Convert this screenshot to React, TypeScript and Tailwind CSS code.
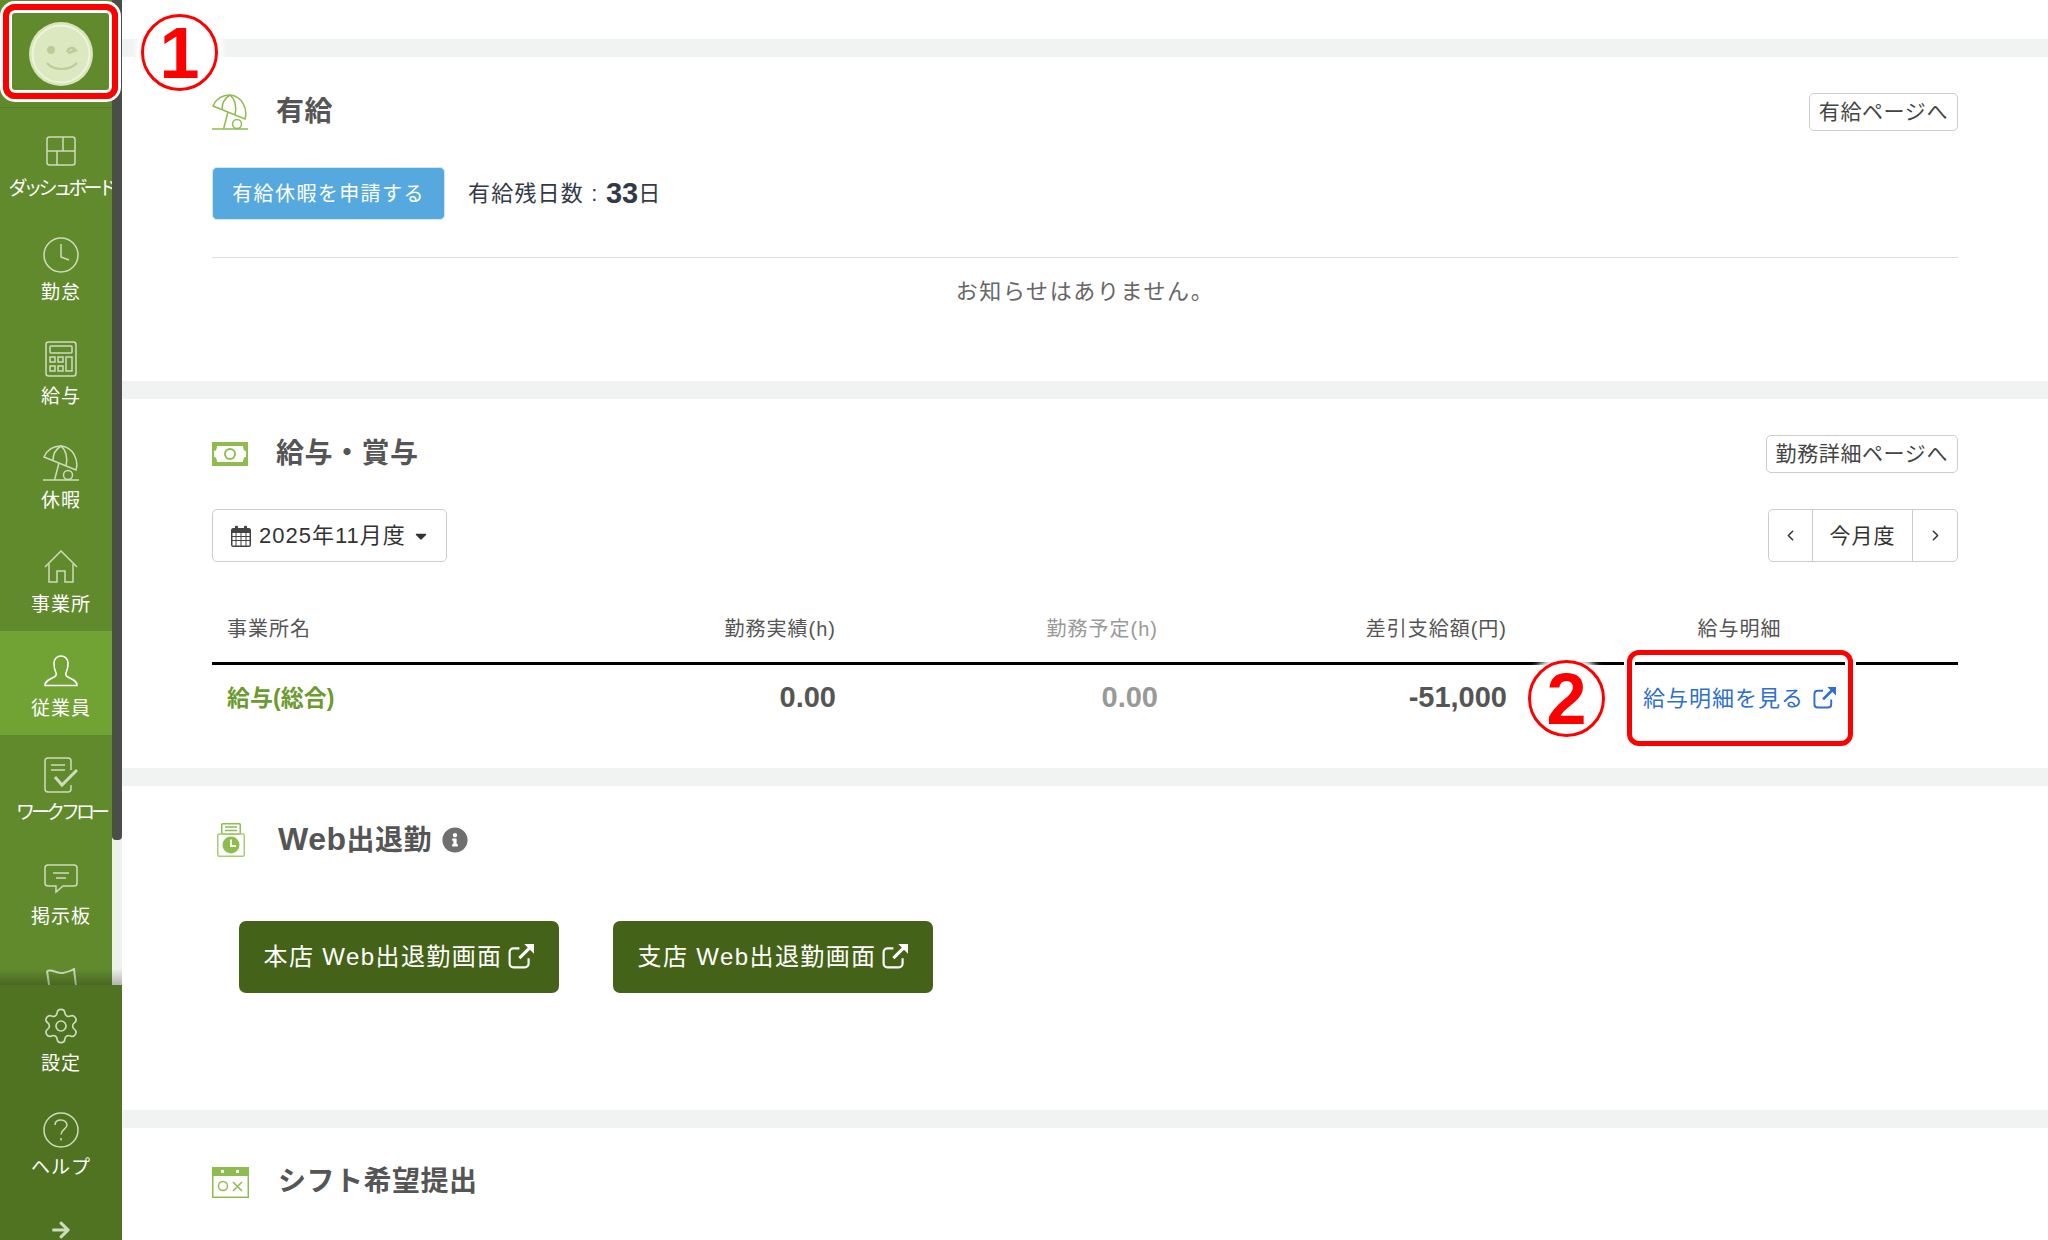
import { ChevronLeft, ChevronRight, Settings } from "lucide-react"
import { FaArrowRight, FaCaretDown, FaInfoCircle } from "react-icons/fa"
import type { ReactNode } from "react"

const Umbrella = ({ className }: { className: string }) => (
  <svg viewBox="0 0 36 36" fill="none" stroke="currentColor" strokeWidth="1.5" className={className}>
    <path d="M0 35H36" />
    <path d="M1 12L33 25C36 15 30 2 18 1C10 1 4 5 1 12Z" />
    <path d="M10 15.5C10 9 13 4 18 1C23 5 25 13 23 21" />
    <path d="M16 18L11.5 35" />
    <circle cx="25" cy="30" r="4.5" />
  </svg>
)

const Dashboard = () => (
  <svg viewBox="0 0 30 30" fill="none" stroke="currentColor" strokeWidth="1.5" className="w-[30px] h-[30px]">
    <rect x="1" y="1" width="28" height="28" rx="2.5" />
    <path d="M1 15H29M17 1V15M11 15V29" />
  </svg>
)

const Clock = () => (
  <svg viewBox="0 0 36 36" fill="none" stroke="currentColor" strokeWidth="1.5" className="w-9 h-9">
    <circle cx="18" cy="18" r="17" />
    <path d="M18 7V20L26 23" />
  </svg>
)

const Calculator = () => (
  <svg viewBox="0 0 32 36" fill="none" stroke="currentColor" strokeWidth="1.5" className="w-8 h-9">
    <rect x="1" y="1" width="30" height="34" rx="2.5" />
    <rect x="5" y="5" width="22" height="7" rx="1" />
    <rect x="5" y="16" width="5" height="5" />
    <rect x="13" y="16" width="5" height="5" />
    <rect x="21" y="16" width="6" height="14" />
    <rect x="5" y="25" width="5" height="5" />
    <rect x="13" y="25" width="5" height="5" />
  </svg>
)

const House = () => (
  <svg viewBox="0 0 34 34" fill="none" stroke="currentColor" strokeWidth="1.5" className="w-[34px] h-[34px]">
    <path d="M1 17L17 1L33 17" />
    <path d="M5 14V32H13V21H21V32H29V14" />
  </svg>
)

const Person = () => (
  <svg viewBox="0 0 34 32" fill="none" stroke="currentColor" strokeWidth="1.6" className="w-[34px] h-8">
    <path d="M1 30.500H33C33 25 27 24 23 21.500C21 20 21.500 18.500 22.500 16.500C24 13.500 24 11 24 8C24 4 21 1 17 1C13 1 10 4 10 8C10 11 10 13.500 11.500 16.500C12.500 18.500 13 20 11 21.500C7 24 1 25 1 30.500Z" />
  </svg>
)

const Workflow = () => (
  <svg viewBox="0 0 34 36" fill="none" stroke="currentColor" strokeWidth="1.5" className="w-[34px] h-9">
    <path d="M27 13V4C27 2 26 1 24 1H4C2 1 1 2 1 4V32C1 34 2 35 4 35H24C26 35 27 34 27 32V28" />
    <path d="M7 8H21M7 13H21" />
    <path d="M11 20L18 28L33 13" strokeWidth="3" />
  </svg>
)

const Board = () => (
  <svg viewBox="0 0 34 30" fill="none" stroke="currentColor" strokeWidth="1.5" className="w-[34px] h-[30px]">
    <path d="M4 1H30C32 1 33 2 33 4V19C33 21 32 22 30 22H19L12 28V22H4C2 22 1 21 1 19V4C1 2 2 1 4 1Z" />
    <path d="M9 9H25M12 14H22" />
  </svg>
)

const Flag = () => (
  <svg viewBox="0 0 32 30" fill="none" stroke="currentColor" strokeWidth="2" className="w-8 h-[30px]">
    <path d="M2 3C8 1 12 6 18 5C22 4 26 3 29 1L31 18C26 22 10 20 6 20" />
    <path d="M2 3L6 30" />
  </svg>
)

const Help = () => (
  <svg viewBox="0 0 36 36" fill="none" stroke="currentColor" strokeWidth="1.5" className="w-9 h-9">
    <circle cx="18" cy="18" r="17" />
    <path d="M12 13C12 9.500 15 8 18 8C21 8 24 10 24 13C24 17 18 17.500 18 22.500" />
    <path d="M18 26V28.500" />
  </svg>
)

const Money = () => (
  <svg viewBox="0 0 36 24" className="w-9 h-6">
    <path fillRule="evenodd" fill="#8fbc4f" d="M0 0H36V24H0ZM5 4C5 7 4 9 2 9V15C4 15 5 17 5 20H31C31 17 32 15 34 15V9C32 9 31 7 31 4Z" />
    <circle cx="18" cy="12" r="5" fill="none" stroke="#8fbc4f" strokeWidth="2" />
  </svg>
)

const WebClock = () => (
  <svg viewBox="0 0 28 34" fill="none" className="w-7 h-[34px]">
    <rect x="4.750" y="0.750" width="18.500" height="10.500" rx="1" stroke="#8fbc4f" strokeWidth="1.500" />
    <path d="M8 4H20M8 7.500H20" stroke="#8fbc4f" strokeWidth="1.500" />
    <rect x="0.750" y="11" width="26.500" height="22.250" rx="1.500" stroke="#a9cd75" strokeWidth="1.500" />
    <circle cx="14" cy="22" r="8.500" fill="#8fbc4f" />
    <path d="M14 16.500V23H19" stroke="#fff" strokeWidth="1.800" />
  </svg>
)

const ShiftCal = () => (
  <svg viewBox="0 0 37 31" fill="none" className="w-[37px] h-[31px]">
    <rect x="0.750" y="0.750" width="35.500" height="29.500" stroke="#8fbc4f" strokeWidth="1.500" />
    <path fill="#8fbc4f" fillRule="evenodd" d="M0 0H37V9H0ZM9 3V6H12V3ZM24 3V6H27V3Z" />
    <circle cx="11" cy="19" r="4.500" stroke="#8fbc4f" strokeWidth="1.500" />
    <path d="M21 15L30 24M30 15L21 24" stroke="#8fbc4f" strokeWidth="1.500" />
  </svg>
)

const CalendarIcon = () => (
  <svg viewBox="0 0 20 22" className="w-5 h-[22px]">
    <path fill="#444" fillRule="evenodd" d="M2 3H4V1.500C4 .5 7 .5 7 1.500V3H13V1.500C13 .5 16 .5 16 1.500V3H18C19 3 20 4 20 5V20C20 21 19 22 18 22H2C1 22 0 21 0 20V5C0 4 1 3 2 3ZM1.500 8V11H4.500V8ZM5.500 8V11H9.500V8ZM10.500 8V11H14.500V8ZM15.500 8V11H18.500V8ZM1.500 12V15H4.500V12ZM5.500 12V15H9.500V12ZM10.500 12V15H14.500V12ZM15.500 12V15H18.500V12ZM1.500 16V20.500H4.500V16ZM5.500 16V20.500H9.500V16ZM10.500 16V20.500H14.500V16ZM15.500 16V20.500H18.500V16Z" />
  </svg>
)

const ExternalLink = ({ className }: { className: string }) => (
  <svg viewBox="0 0 24 24" fill="none" stroke="currentColor" className={className}>
    <path d="M19 14V19C19 21 17.500 22.500 15.500 22.500H5C3 22.500 1.500 21 1.500 19V8.500C1.500 6.500 3 5 5 5H10.500" strokeWidth="2" />
    <path d="M10.500 14L20 4.500" strokeWidth="2.800" />
    <path d="M15 1H24V10Z" fill="currentColor" stroke="none" />
  </svg>
)

const navItems: { label: string; icon: ReactNode; active?: boolean; tight?: boolean }[] = [
  { label: "ダッシュボード", icon: <Dashboard />, tight: true },
  { label: "勤怠", icon: <Clock /> },
  { label: "給与", icon: <Calculator /> },
  { label: "休暇", icon: <Umbrella className="w-9 h-9" /> },
  { label: "事業所", icon: <House /> },
  { label: "従業員", icon: <Person />, active: true },
  { label: "ワークフロー", icon: <Workflow />, tight: true },
  { label: "掲示板", icon: <Board /> },
  { label: "", icon: <Flag /> },
]

const NavItem = ({ label, icon, active, tight }: { label: string; icon: ReactNode; active?: boolean; tight?: boolean }) => (
  <div className={`h-[104px] shrink-0 pt-5 flex flex-col items-center ${active ? "bg-[#70a334] text-white" : "text-[#cfdcbc]"}`}>
    <div className="h-10 flex items-center justify-center">{icon}</div>
    <div className={`mt-[2px] leading-8 text-[19px] text-white whitespace-nowrap ${tight ? "tracking-[-4px]" : "tracking-[1px]"}`}>
      {label}
    </div>
  </div>
)

const Sidebar = () => (
  <div className="w-[122px] h-[1240px] shrink-0 flex flex-col">
    <div className="flex-1 min-h-0 overflow-hidden relative bg-[#618a2d]">
      <div className="h-[108px] flex items-center justify-center border-b border-[#567d27]">
        <svg viewBox="0 0 64 64" fill="none" className="w-16 h-16">
          <circle cx="32" cy="32" r="32" fill="#d8e5b9" />
          <circle cx="32" cy="32" r="28.500" fill="#dce8c0" stroke="#edf3de" strokeWidth="2" />
          <circle cx="22" cy="28" r="4" fill="#b9cc99" />
          <path d="M38 30C39 26 43 25 46 27M39 31L48 28" stroke="#b9cc99" strokeWidth="2.500" />
          <path d="M18 41C25 49 40 49 48 41" stroke="#b9cc99" strokeWidth="2" />
        </svg>
      </div>
      <div className="pt-[3px] flex flex-col">
        {navItems.map((item) => (
          <NavItem key={item.label || "map"} {...item} />
        ))}
      </div>
      {/* scrollbar */}
      <div className="absolute right-0 top-0 bottom-0 w-[10px] bg-[#eef1ea]">
        <div className="h-[840px] bg-[#4b4d47] rounded-b-[4px]"></div>
      </div>
      <div className="absolute left-0 right-0 bottom-0 h-4 bg-gradient-to-b from-transparent to-[#00000040]"></div>
    </div>
    <div className="h-[255px] shrink-0 bg-[#4f7321] pt-px overflow-hidden">
      <NavItem label="設定" icon={<Settings size={40} strokeWidth={1} />} />
      <NavItem label="ヘルプ" icon={<Help />} />
      <div className="pt-[26px] flex justify-center text-[#cfdcbc]">
        <FaArrowRight size={20} />
      </div>
    </div>
  </div>
)

const SectionTitle = ({ icon, children, gap = "w-[64px]" }: { icon: ReactNode; children: ReactNode; gap?: string }) => (
  <div className="flex items-center h-10">
    <div className={`${gap} flex items-center`}>{icon}</div>
    <div className="text-[28px] leading-10 font-bold tracking-[0.5px] text-[#555555]">{children}</div>
  </div>
)

const LinkButton = ({ children }: { children: ReactNode }) => (
  <div className="h-[38px] px-[9px] border border-[#cccccc] rounded-[5px] flex items-center text-[21px] tracking-[0.6px] text-[#444444] whitespace-nowrap">
    {children}
  </div>
)

const WebButton = ({ label }: { label: string }) => (
  <div className="w-[320px] h-[72px] bg-[#456318] rounded-[7px] flex items-center justify-center gap-[6px] text-white text-[24px] tracking-[1.4px] whitespace-nowrap">
    <span>{label}</span>
    <ExternalLink className="w-[26px] h-[26px] -mt-[3px]" />
  </div>
)

const tableCols = "grid grid-cols-[300px_338px_322px_349px_437px]"

const PaySection = () => (
  <div className="border-t-[18px] border-[#f1f3f2] pt-[35px] pb-[37px] px-[90px]">
    <div className="flex items-center justify-between">
      <SectionTitle icon={<Money />}>給与・賞与</SectionTitle>
      <LinkButton>勤務詳細ページへ</LinkButton>
    </div>

    <div className="mt-[35px] flex items-center justify-between">
      <div className="w-[235px] h-[53px] border border-[#cccccc] rounded-[5px] flex items-center pl-[18px] gap-[8px] text-[22px] tracking-[1px] text-[#333333] whitespace-nowrap">
        <CalendarIcon />
        <span>2025年11月度</span>
        <FaCaretDown size={18} className="text-[#333333] -ml-[2px]" />
      </div>
      <div className="w-[190px] h-[53px] border border-[#cccccc] rounded-[5px] flex items-center text-[#333333]">
        <div className="w-11 h-full border-r border-[#cccccc] flex items-center justify-center">
          <ChevronLeft size={17} strokeWidth={2.2} />
        </div>
        <div className="flex-1 text-center text-[21px] tracking-[1px]">今月度</div>
        <div className="w-[45px] h-full border-l border-[#cccccc] flex items-center justify-center">
          <ChevronRight size={17} strokeWidth={2.2} />
        </div>
      </div>
    </div>

    <div className={`mt-[50px] ${tableCols} text-[20px] leading-[34px] tracking-[1px] text-[#555555] pb-4 border-b-[3px] border-black`}>
      <div className="pl-[15px]">事業所名</div>
      <div className="pr-[14px] text-right">勤務実績(h)</div>
      <div className="pr-[14px] text-right text-[#999999]">勤務予定(h)</div>
      <div className="pr-[14px] text-right">差引支給額(円)</div>
      <div className="text-center">給与明細</div>
    </div>
    <div className={`h-[66px] ${tableCols} items-center text-[#555555]`}>
      <div className="pl-[15px] text-[23px] font-bold text-[#6b9a2e]">給与(総合)</div>
      <div className="pr-[14px] text-right text-[29px] font-bold">0.00</div>
      <div className="pr-[14px] text-right text-[29px] font-bold text-[#999999]">0.00</div>
      <div className="pr-[14px] text-right text-[29px] font-bold">-51,000</div>
      <div className="flex items-center justify-center gap-[9px] text-[22px] tracking-[1px] text-[#2f6fce]">
        <span>給与明細を見る</span>
        <ExternalLink className="w-[23px] h-[23px] -mt-[2px]" />
      </div>
    </div>
  </div>
)

const App = () => {
  return (
    <div className="relative w-[2048px] h-[1240px] overflow-hidden bg-white flex font-['Liberation_Sans','Noto_Sans_CJK_JP',sans-serif]">
      <Sidebar />

      <div className="flex-1 min-w-0 pt-[39px]">
        {/* 有給 */}
        <div className="border-t-[18px] border-[#f1f3f2] pt-[35px] pb-[72px] px-[90px]">
          <div className="flex items-center justify-between">
            <SectionTitle icon={<Umbrella className="w-9 h-9 text-[#8fbc4f]" />}>有給</SectionTitle>
            <LinkButton>有給ページへ</LinkButton>
          </div>
          <div className="mt-[35px] flex items-center">
            <div className="w-[233px] h-[53px] bg-[#56a9de] border border-[#cfe8f8] rounded-[5px] flex items-center justify-center text-white text-[20px] tracking-[1.4px] whitespace-nowrap">
              有給休暇を申請する
            </div>
            <div className="ml-[23px] text-[22px] tracking-[1.2px] text-[#333a47] flex items-center h-[53px]">
              <span>有給残日数 :&nbsp;</span>
              <span className="font-bold text-[29px] tracking-[0px]">33</span>
              <span>日</span>
            </div>
          </div>
          <div className="mt-[37px] border-t border-[#dddddd] pt-[17px] text-center text-[22px] leading-[34px] tracking-[1.6px] text-[#666666]">
            お知らせはありません。
          </div>
        </div>

        <PaySection />

        {/* Web出退勤 */}
        <div className="border-t-[18px] border-[#f1f3f2] pt-[34px] pb-[117px] px-[90px]">
          <SectionTitle
            icon={<div className="pl-[5px]"><WebClock /></div>}
            gap="w-[66px]"
          >
            <span className="flex items-center gap-[10px]">
              <span><span className="text-[32px]">Web</span>出退勤</span>
              <FaInfoCircle size={26} className="text-[#6f6f6f]" />
            </span>
          </SectionTitle>
          <div className="mt-[61px] ml-[27px] flex gap-[54px]">
            <WebButton label="本店 Web出退勤画面" />
            <WebButton label="支店 Web出退勤画面" />
          </div>
        </div>

        {/* シフト希望提出 */}
        <div className="border-t-[18px] border-[#f1f3f2] pt-[34px] px-[90px]">
          <SectionTitle icon={<ShiftCal />} gap="w-[66px]">シフト希望提出</SectionTitle>
        </div>
      </div>

      {/* 注釈 */}
      <div className="absolute left-[3px] top-[4px] w-[115px] h-[95px] border-[6px] border-[#ff0000] rounded-[12px] shadow-[0_0_0_3px_#fff,inset_0_0_0_3px_#fff]"></div>
      <div className="absolute left-[141px] top-[14px] w-[77px] h-[77px] rounded-full bg-white border-[3px] border-[#ff0000] shadow-[0_0_6px_5px_#fff] flex items-center justify-center text-[#ff0000] text-[72px] leading-none font-bold font-['Liberation_Sans',sans-serif]">1</div>
      <div className="absolute left-[1627px] top-[650px] w-[226px] h-[96px] border-[5px] border-[#ff0000] rounded-[12px] shadow-[0_0_0_3px_#fff,inset_0_0_0_3px_#fff]"></div>
      <div className="absolute left-[1528px] top-[660px] w-[77px] h-[77px] rounded-full bg-white border-[3px] border-[#ff0000] shadow-[0_0_6px_5px_#fff] flex items-center justify-center text-[#ff0000] text-[72px] leading-none font-bold font-['Liberation_Sans',sans-serif]">2</div>
    </div>
  )
}

export default App
